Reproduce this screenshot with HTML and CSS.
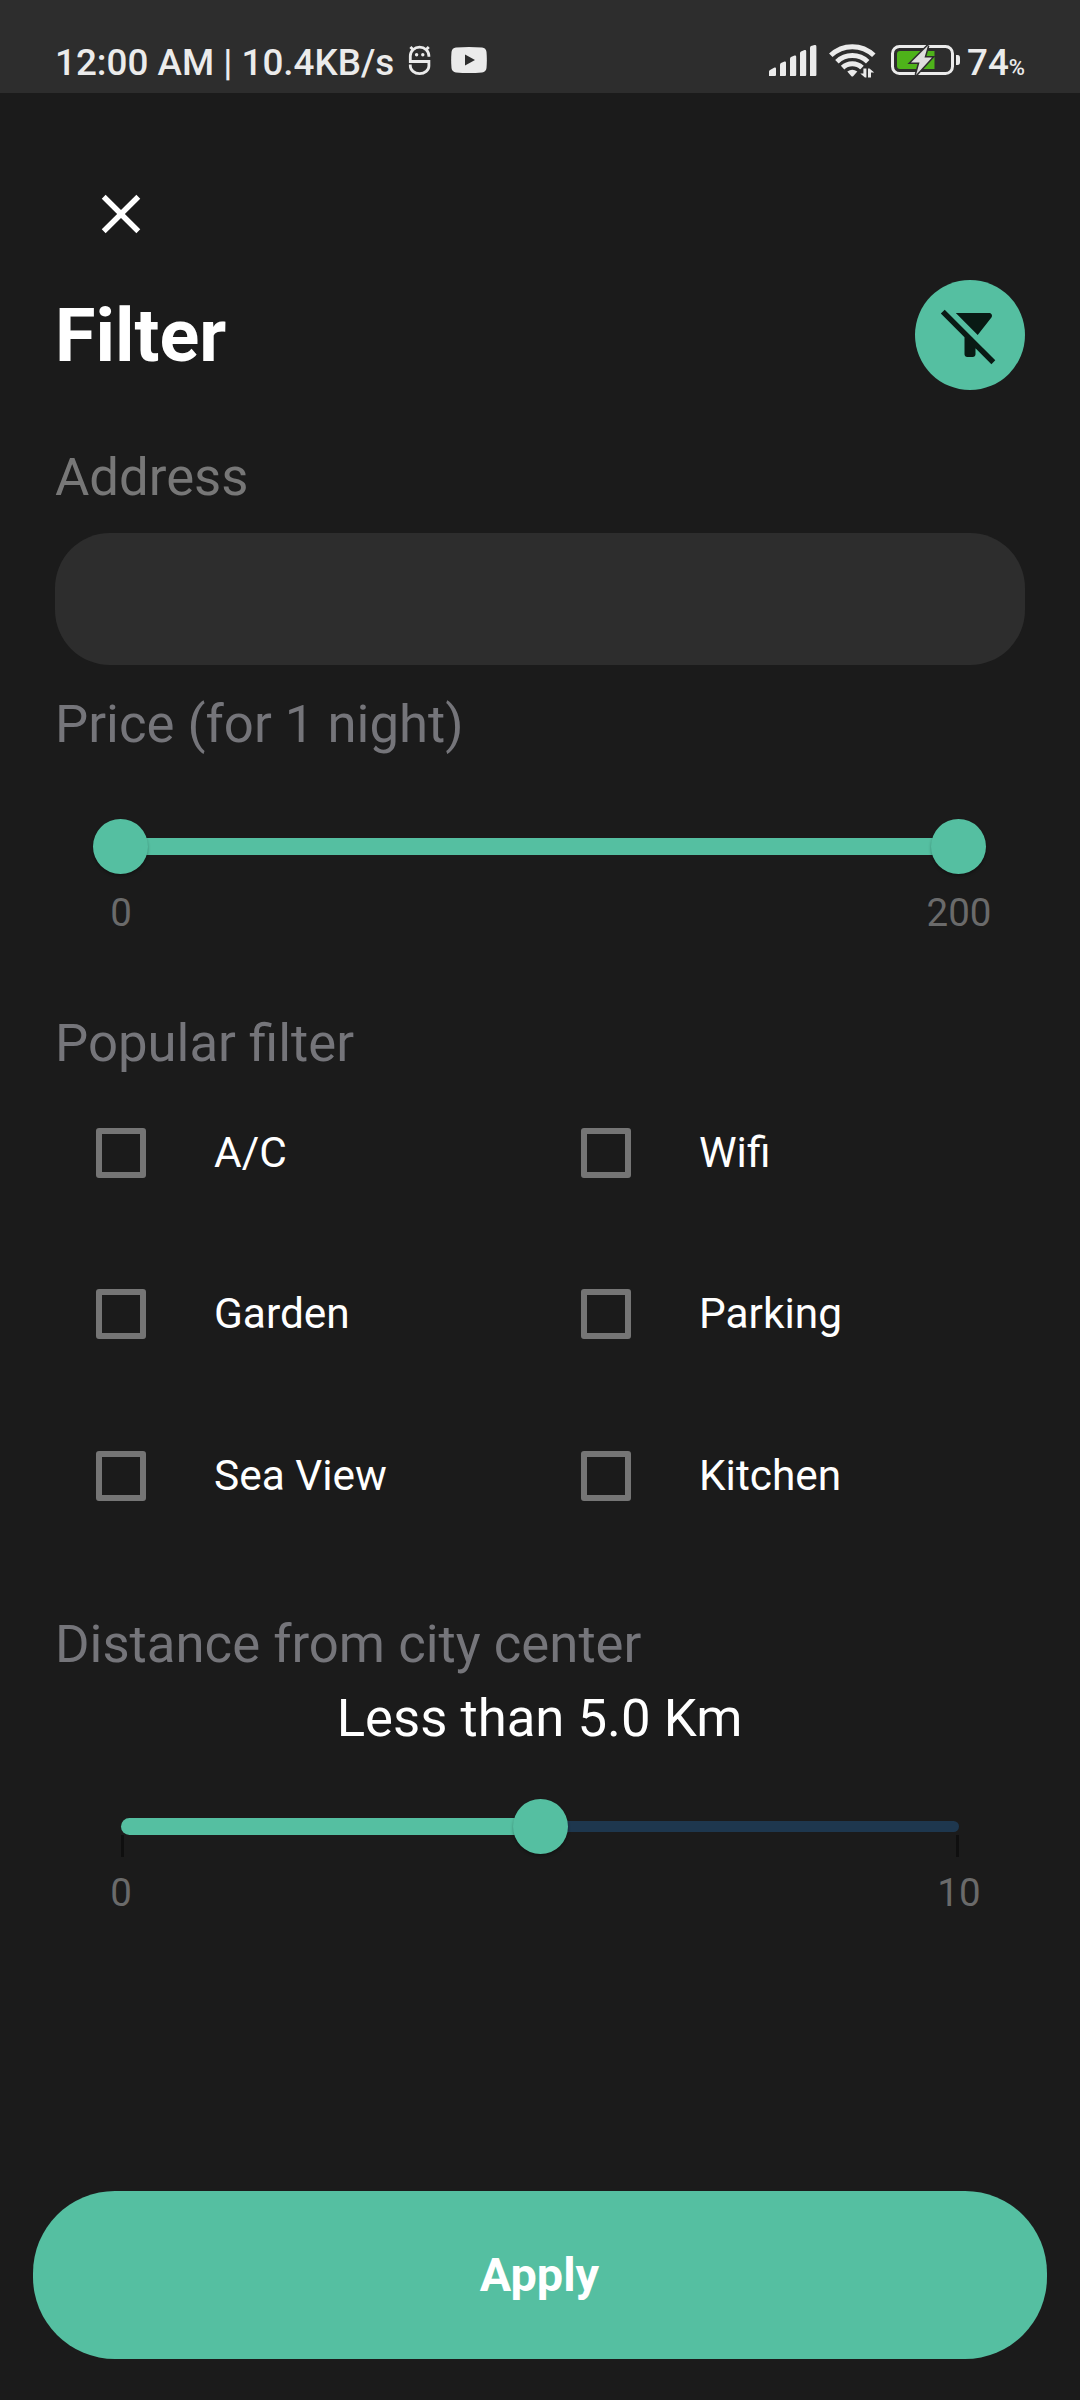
FILE: index.html
```html
<!DOCTYPE html>
<html lang="en">
<head>
<meta charset="utf-8">
<title>Filter</title>
<link rel="stylesheet" href="styles.css">
</head>
<body>
<div class="screen">
  <header class="status">
    <span class="status-text">12:00 AM | 10.4KB/s</span>
    <svg class="bug" width="24" height="32" viewBox="0 0 24 32" fill="none" stroke="#ebebeb" stroke-width="2.8">
      <path d="M20.900 12.800V12a9.300 8.800 0 0 0-18.600 0v5.500h18.600v4.500a9.300 7.600 0 0 1-18.600 0V20.500"/>
      <path d="M5 5.500L2.400 2.900M18.200 5.500L20.800 2.900"/>
      <circle cx="8.600" cy="10.800" r="1.700" fill="#ebebeb" stroke="none"/>
      <circle cx="14.800" cy="10.800" r="1.700" fill="#ebebeb" stroke="none"/>
    </svg>
    <svg class="video" width="36" height="26" viewBox="0 0 36 26">
      <path fill="#ebebeb" d="M5 .6Q18-.5 31 .6Q35 1 35.500 5Q36.200 13 35.500 21Q35 25 31 25.400Q18 26.500 5 25.400Q1 25 .5 21Q-.2 13 .5 5Q1 1 5 .6z"/>
      <path fill="#2d2d2d" d="M14 7.600L24 13L14 18.400z"/>
    </svg>
    <svg class="signal" width="48" height="31" viewBox="0 0 48 31" fill="#ebebeb">
      <path d="M0 31V26.500Q0 25.500 1 25L5.500 22.500Q7 22 7 23.500V30Q7 31 6 31z"/>
      <path d="M11 31V19.500Q11 18.500 12 18L15.500 16.600Q17 16.200 17 17.700V30Q17 31 16 31z"/>
      <path d="M21 31V13.500Q21 12.500 22 12L25.500 10.600Q27.200 10.200 27.200 11.700V30Q27.200 31 26.200 31z"/>
      <path d="M31 31V8Q31 7 32 6.500L35.500 5.100Q37.200 4.700 37.200 6.200V30Q37.200 31 36.200 31z"/>
      <path d="M41 31V2.600Q41 1.600 42 1.100L45.500 .1Q47.400-.2 47.400 1.500V30Q47.400 31 46.400 31z"/>
    </svg>
    <svg class="wifi" width="47" height="36" viewBox="0 0 47 36">
      <g fill="none" stroke="#ebebeb" stroke-width="5">
        <path d="M1.800 12.300A31 31 0 0 1 44.800 12.300"/>
        <path d="M7.900 18.700A22.300 22.300 0 0 1 38.700 18.700"/>
        <path d="M13.600 24.600A14 14 0 0 1 33 24.600"/>
      </g>
      <path fill="#ebebeb" d="M18.300 28.600Q23.300 24.800 28.300 28.600L24.400 33Q23.300 34 22.200 33z"/>
      <g fill="none" stroke="#2d2d2d" stroke-width="9"><path d="M36 26V36M41 26V36"/></g>
      <path fill="#ebebeb" d="M34.400 25.500h3V34.500h-1.500L31.300 30.500h3.100zM39 34.500V25.500h1.500L45.200 29.500H42v5z"/>
    </svg>
    <svg class="battery" width="70" height="32" viewBox="0 0 70 32">
      <rect x="1.500" y="2.500" width="60" height="27" rx="7" fill="none" stroke="#ebebeb" stroke-width="3"/>
      <path fill="#ebebeb" d="M65 11h1.500Q69 11 69 14v4Q69 21 66.500 21H65z"/>
      <path fill="#4eb31a" d="M9 7H43.500V25H9Q6 25 6 22V10Q6 7 9 7z"/>
      <path fill="#dedede" stroke="#2d2d2d" stroke-width="3" paint-order="stroke" d="M37 1.500L20 18.500H28.500L25 31L41 13.500H33.500z"/>
    </svg>
    <span class="percent">74<small>%</small></span>
  </header>

  <main class="content">
    <button class="close" aria-label="Close">
      <svg width="66" height="66" viewBox="0 0 24 24" fill="#fff"><path d="M19 6.410L17.590 5 12 10.590 6.410 5 5 6.410 10.590 12 5 17.590 6.410 19 12 13.410 17.590 19 19 17.590 13.410 12z"/></svg>
    </button>
    <div class="title-row">
      <h1 class="title">Filter</h1>
      <button class="clear" aria-label="Clear filters">
        <svg width="66" height="66" viewBox="0 0 24 24" fill="#091a14"><path d="M19.790 5.610C20.300 4.950 19.830 4 19 4H6.830l7.970 7.970 4.990-6.360zM2.810 2.810L1.390 4.220 10 12.830V19c0 .55.45 1 1 1h2c.55 0 1-.45 1-1v-2.170l5.780 5.780 1.410-1.410L2.810 2.810z"/></svg>
      </button>
    </div>

    <h2 class="label address">Address</h2>
    <div class="field"></div>

    <h2 class="label price">Price (for 1 night)</h2>
    <div class="slider">
      <span class="thumb"></span><span class="track"></span><span class="thumb"></span>
    </div>
    <div class="scale"><span>0</span><span>200</span></div>

    <h2 class="label popular">Popular filter</h2>
    <div class="options">
      <label class="option"><span class="box"></span>A/C</label>
      <label class="option"><span class="box"></span>Wifi</label>
      <label class="option"><span class="box"></span>Garden</label>
      <label class="option"><span class="box"></span>Parking</label>
      <label class="option"><span class="box"></span>Sea View</label>
      <label class="option"><span class="box"></span>Kitchen</label>
    </div>

    <h2 class="label distance">Distance from city center</h2>
    <p class="value">Less than 5.0 Km</p>
    <div class="slider single">
      <span class="track start"></span><span class="thumb"></span><span class="track rest"></span>
      <span class="tick first"></span><span class="tick last"></span>
    </div>
    <div class="scale"><span>0</span><span>10</span></div>
  </main>

  <button class="apply">Apply</button>
</div>
</body>
</html>
```
FILE: styles.css
```css
* { box-sizing: border-box; margin: 0; padding: 0; }

body {
  background: #1b1b1b;
  color: #fff;
  font-family: Roboto, sans-serif;
}

button { border: 0; background: none; color: inherit; font: inherit; }
svg { display: block; flex: none; }

.screen {
  display: flex;
  flex-direction: column;
  width: 1080px;
  height: 2400px;
  overflow: hidden;
}

/* Status bar */
.status {
  display: flex;
  align-items: flex-start;
  height: 93px;
  padding: 0 55px;
  background: #2d2d2d;
  color: #ebebeb;
  font-weight: 500;
  font-size: 36.8px;
  line-height: 44px;
  white-space: nowrap;
}
.status-text { width: 353px; padding-top: 41px; }
.bug { margin-top: 44px; }
.video { margin: 47px 0 0 19px; }
.signal { margin: 45px 0 0 auto; }
.wifi { margin: 43px 0 0 12px; }
.battery { margin: 44px 0 0 15px; }
.percent { width: 58px; margin-left: 6px; padding-top: 41px; }
.percent small { font-size: 22px; }

/* Filter form */
.content { flex: 1; padding: 88px 55px 0; }

.close { display: block; margin-left: 33px; }

.title-row {
  display: flex;
  align-items: center;
  justify-content: space-between;
  height: 110px;
  margin-top: 33px;
}
.title { padding-top: 1px; font-size: 73.7px; line-height: 88px; font-weight: 700; }
.clear {
  display: grid;
  place-items: center;
  width: 110px;
  height: 110px;
  border-radius: 50%;
  background: #55bfa1;
}

.label {
  color: #75757a;
  font-size: 52.7px;
  line-height: 60px;
  font-weight: 400;
}
.address { margin-top: 57px; color: #777; }
.price { margin-top: 29px; }
.popular { margin-top: 78px; }
.distance { margin-top: 57px; }

.field {
  height: 132px;
  margin-top: 26px;
  border-radius: 55px;
  background: #2d2d2d;
}

/* Sliders */
.slider {
  position: relative;
  display: flex;
  align-items: center;
  height: 55px;
  margin: 65px 39px 0 38px;
}
.thumb {
  z-index: 1;
  flex: none;
  width: 55px;
  height: 55px;
  border-radius: 50%;
  background: #55bfa1;
  box-shadow: 0 2px 3px rgba(0, 0, 0, .3);
}
.track { flex: 1; height: 17px; margin: 0 -6px; background: #55bfa1; }

.single { margin: 51px 66px 0; }
.start { margin-left: 0; border-radius: 8.5px 0 0 8.5px; }
.rest { height: 11px; margin-right: 0; border-radius: 0 5.5px 5.5px 0; background: #1e374e; }
.tick { position: absolute; top: 36px; width: 3px; height: 22px; background: #0f0f0f; }
.first { left: 0; }
.last { right: 0; }

.scale {
  display: flex;
  justify-content: space-between;
  margin: 17px 16px 0;
  color: #6a6a6a;
  font-size: 38.5px;
  line-height: 44px;
}
.scale span { width: 100px; text-align: center; }

/* Amenities */
.options {
  display: grid;
  grid-template-columns: 1fr 1fr;
  grid-auto-rows: 161.5px;
  margin-top: -1px;
}
.option {
  display: flex;
  align-items: center;
  gap: 68px;
  padding-left: 41px;
  font-size: 42.4px;
  line-height: 50px;
}
.box {
  width: 50px;
  height: 50px;
  border: 6px solid #757575;
  border-radius: 3px;
}

.value { margin-top: 14px; padding-right: 1px; font-size: 52.7px; line-height: 60px; text-align: center; }

.apply {
  height: 168px;
  margin: 0 33px 41px;
  padding-right: 1px;
  border-radius: 82px;
  background: #55bfa1;
  font-size: 46.8px;
  font-weight: 700;
}
```
